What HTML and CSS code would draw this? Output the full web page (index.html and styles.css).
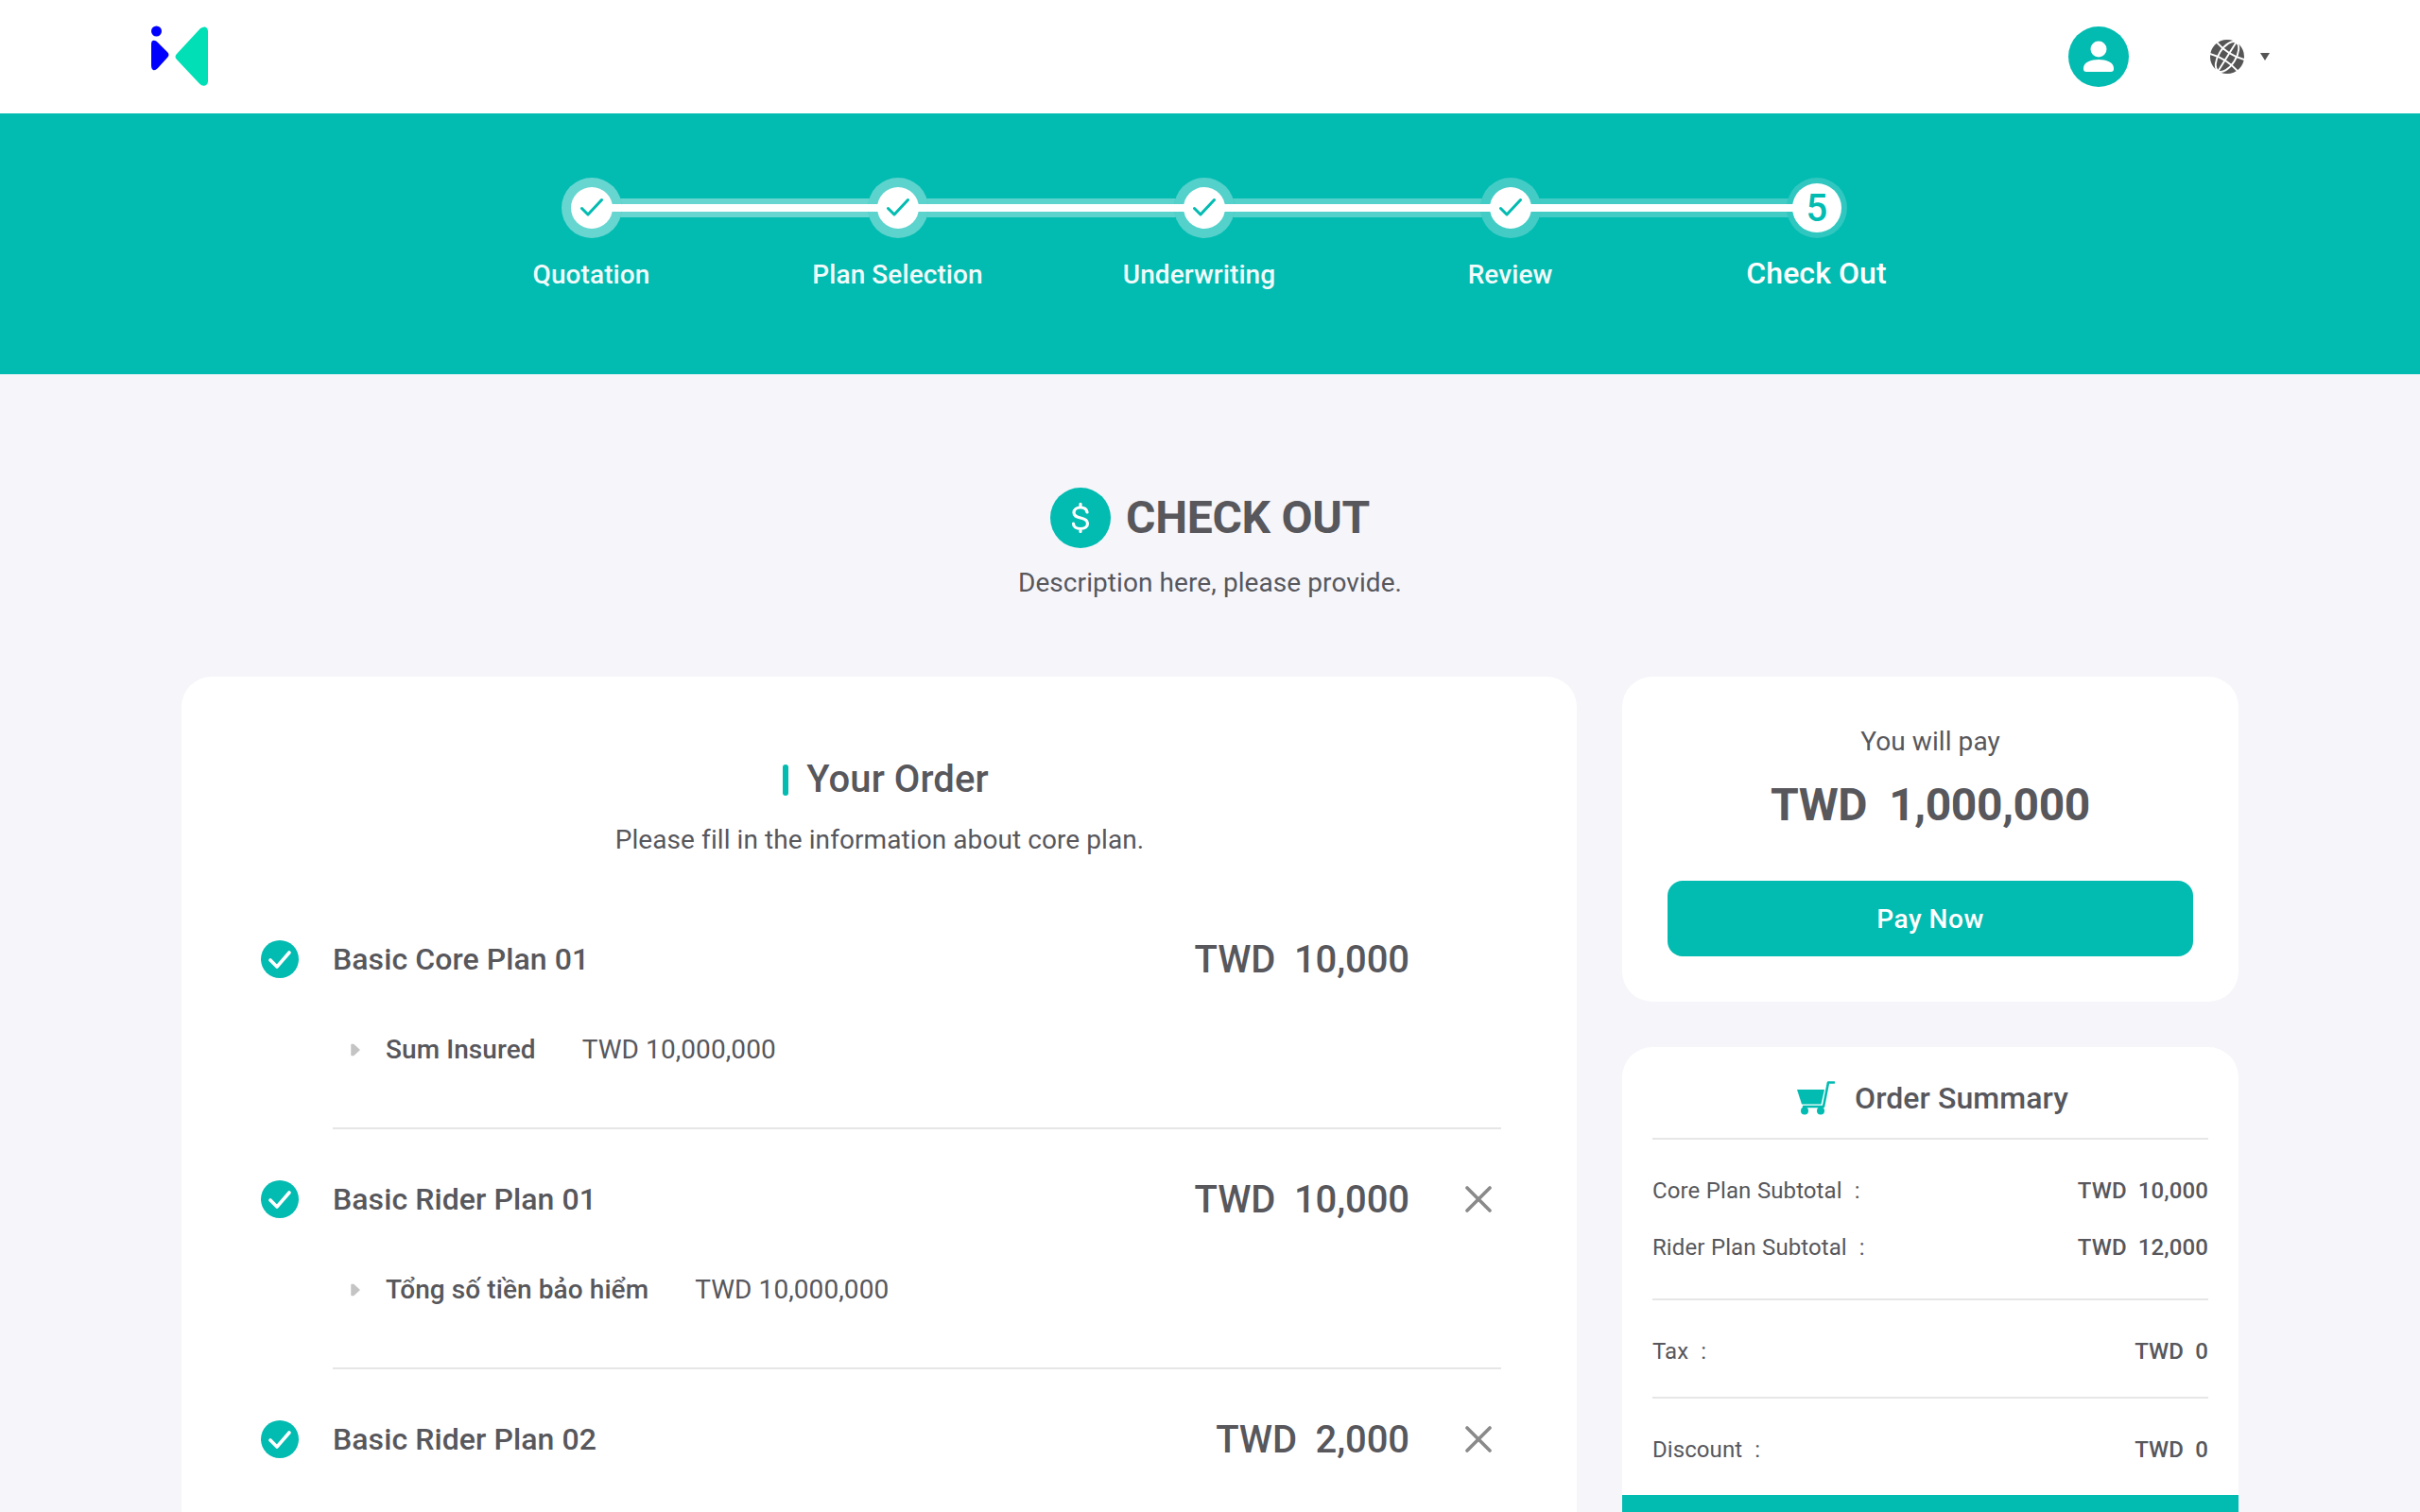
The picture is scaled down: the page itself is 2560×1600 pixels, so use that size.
FILE: index.html
```html
<!DOCTYPE html>
<html lang="en">
<head>
    <meta charset="UTF-8">
    <meta name="viewport" content="width=device-width, initial-scale=1.0">
    <title>Check Out</title>
    <link rel="stylesheet" href="styles.css">
</head>
<body>
    <svg class="sprite" width="0" height="0">
        <symbol id="tick" viewBox="0 0 24 24">
            <path d="M1.500 12.500l6.500 6.500L22.500 3.500" fill="none" stroke="currentColor" stroke-width="3" stroke-linecap="round" stroke-linejoin="round"/>
        </symbol>
        <symbol id="done" viewBox="0 0 40 40">
            <circle cx="20" cy="20" r="20" fill="#02bbb1"/>
            <path d="M10 21l7 7 13-15" fill="none" stroke="#fff" stroke-width="3.600" stroke-linecap="round" stroke-linejoin="round"/>
        </symbol>
        <symbol id="close" viewBox="0 0 28 28">
            <path d="M2 2l24 24M26 2L2 26" fill="none" stroke="#8a8a8a" stroke-width="3.600" stroke-linecap="round"/>
        </symbol>
        <symbol id="arrow" viewBox="0 0 10 14">
            <path d="M1 1.500h2L9 7l-6 5.500H1z" fill="#c4c4c4" stroke="#c4c4c4" stroke-width="1.500" stroke-linejoin="round"/>
        </symbol>
    </svg>

    <header class="topbar">
        <svg class="logo" width="60" height="66" viewBox="0 0 60 66">
            <circle cx="5.500" cy="6" r="5.500" fill="#0000ff"/>
            <path d="M0 20q0-5 4-4 1 0 3 2l10 10q3 3 0 6L7 45q-3 3-5 2-2-1-2-5z" fill="#0000ff"/>
            <path d="M52 3q3-2 5-1.500 3 1 3 5v52q0 4-3 5-3 1-6-2L27 36q-3-3 0-6z" fill="#00dfb5"/>
        </svg>
        <div class="topbar-right">
            <div class="avatar">
                <svg width="34" height="34" viewBox="0 0 34 34">
                    <circle cx="17" cy="9" r="8.500" fill="#fff"/>
                    <path d="M1 29c0-6 8-9 16-9s16 3 16 9v1q0 3-3 3H4q-3 0-3-3z" fill="#fff"/>
                </svg>
            </div>
            <svg class="globe" width="36" height="36" viewBox="0 0 36 36">
                <circle cx="18" cy="18" r="18" fill="#555"/>
                <g transform="rotate(32 18 18)" fill="none" stroke="#fff" stroke-width="1.900">
                    <ellipse cx="18" cy="18" rx="9" ry="18"/>
                    <path d="M18 0v36M1 11q17 5 34 0M1 25q17-5 34 0"/>
                </g>
            </svg>
            <span class="caret"></span>
        </div>
    </header>

    <section class="band">
        <div class="steps">
            <div class="step">
                <div class="dot"><span class="ring"></span><svg width="24" height="24"><use href="#tick"/></svg></div>
                <p class="step-label">Quotation</p>
            </div>
            <div class="step">
                <div class="dot"><span class="ring"></span><svg width="24" height="24"><use href="#tick"/></svg></div>
                <p class="step-label">Plan Selection</p>
            </div>
            <div class="step">
                <div class="dot"><span class="ring"></span><svg width="24" height="24"><use href="#tick"/></svg></div>
                <p class="step-label shifted">Underwriting</p>
            </div>
            <div class="step">
                <div class="dot"><span class="ring"></span><svg width="24" height="24"><use href="#tick"/></svg></div>
                <p class="step-label">Review</p>
            </div>
            <div class="step current">
                <div class="dot"><span class="ring"></span><span class="dot-num">5</span></div>
                <p class="step-label">Check Out</p>
            </div>
        </div>
    </section>

    <main class="page">
        <div class="page-head">
            <h1>
                <span class="dollar">
                    <svg width="20" height="32" viewBox="0 0 20 32">
                        <path d="M17 10C16.500 7 14 5 10 5S3 7 3 10.500 5.500 15 10 16s7.500 2.500 7.500 6-3 5.500-7.500 5.500S2.500 25.500 2.500 22M10 1.500V5M10 27.500v3" fill="none" stroke="#fff" stroke-width="3.200" stroke-linecap="round"/>
                    </svg>
                </span>
                CHECK OUT
            </h1>
            <p>Description here, please provide.</p>
        </div>

        <div class="columns">
            <section class="card order">
                <h2 class="order-title">Your Order</h2>
                <p class="order-desc">Please fill in the information about core plan.</p>

                <div class="plans">
                    <div class="plan">
                        <div class="plan-row">
                            <svg class="plan-check" width="40" height="40"><use href="#done"/></svg>
                            <span class="plan-name">Basic Core Plan 01</span>
                            <span class="plan-price">TWD&nbsp; 10,000</span>
                            <span class="plan-close"></span>
                        </div>
                        <div class="plan-sub">
                            <svg class="arrow" width="10" height="14"><use href="#arrow"/></svg>
                            <span class="sub-label">Sum Insured</span>
                            <span>TWD 10,000,000</span>
                        </div>
                    </div>

                    <div class="plan">
                        <div class="plan-row">
                            <svg class="plan-check" width="40" height="40"><use href="#done"/></svg>
                            <span class="plan-name">Basic Rider Plan 01</span>
                            <span class="plan-price">TWD&nbsp; 10,000</span>
                            <span class="plan-close"><svg width="28" height="28"><use href="#close"/></svg></span>
                        </div>
                        <div class="plan-sub">
                            <svg class="arrow" width="10" height="14"><use href="#arrow"/></svg>
                            <span class="sub-label">Tổng số tiền bảo hiểm</span>
                            <span>TWD 10,000,000</span>
                        </div>
                    </div>

                    <div class="plan">
                        <div class="plan-row">
                            <svg class="plan-check" width="40" height="40"><use href="#done"/></svg>
                            <span class="plan-name">Basic Rider Plan 02</span>
                            <span class="plan-price">TWD&nbsp; 2,000</span>
                            <span class="plan-close"><svg width="28" height="28"><use href="#close"/></svg></span>
                        </div>
                    </div>
                </div>
            </section>

            <aside class="side">
                <section class="card pay">
                    <p class="pay-label">You will pay</p>
                    <p class="pay-amount">TWD&nbsp; 1,000,000</p>
                    <button class="pay-btn">Pay Now</button>
                </section>

                <section class="card summary">
                    <div class="summary-inner">
                        <h3 class="summary-title">
                            <svg width="40" height="36" viewBox="0 0 40 36">
                                <path d="M0 9h29l-3.500 15.500H5z" fill="#02bbb1"/>
                                <path d="M39 1.500h-6L28 27H7" fill="none" stroke="#02bbb1" stroke-width="2.600" stroke-linecap="round" stroke-linejoin="round"/>
                                <circle cx="8" cy="31.500" r="4" fill="#02bbb1"/>
                                <circle cx="25" cy="31.500" r="4" fill="#02bbb1"/>
                            </svg>
                            Order Summary
                        </h3>
                        <div class="sum-group first">
                            <div class="sum-row"><span class="sum-key">Core Plan Subtotal &nbsp;:</span><span class="sum-val">TWD&nbsp; 10,000</span></div>
                            <div class="sum-row"><span class="sum-key">Rider Plan Subtotal &nbsp;:</span><span class="sum-val">TWD&nbsp; 12,000</span></div>
                        </div>
                        <div class="sum-group">
                            <div class="sum-row"><span class="sum-key">Tax &nbsp;:</span><span class="sum-val">TWD&nbsp; 0</span></div>
                        </div>
                        <div class="sum-group last">
                            <div class="sum-row"><span class="sum-key">Discount &nbsp;:</span><span class="sum-val">TWD&nbsp; 0</span></div>
                        </div>
                    </div>
                    <div class="summary-foot"></div>
                </section>
            </aside>
        </div>
    </main>
</body>
</html>
```

FILE: styles.css
```css
* { box-sizing: border-box; }
html, body { height: 100%; }
body { margin: 0; height: 1600px; overflow: hidden; background: #f5f5fa; color: #57575c; font-family: Roboto, "Noto Sans", sans-serif; letter-spacing: .08px; }
h1, h2, h3, p { margin: 0; }
.sprite { display: block; height: 0; }

.topbar { height: 120px; background: #fff; padding: 0 159px 0 160px; display: flex; align-items: center; justify-content: space-between; }
.logo { display: block; }
.topbar-right { display: flex; align-items: center; }
.avatar { width: 64px; height: 64px; border-radius: 50%; background: #02bbb1; display: flex; align-items: center; justify-content: center; margin-right: 86px; }
.globe { display: block; margin-right: 17px; }
.caret { width: 0; height: 0; border-left: 5px solid transparent; border-right: 5px solid transparent; border-top: 8px solid #555; }

/* stepper: band < ring < white line < white disc < tick */
.band { height: 276px; background: #02bbb1; padding: 68px 0 0 464px; }
.steps { display: flex; }
.step { width: 324px; display: flex; flex-direction: column; align-items: center; position: relative; --fade: .4; }
.step:nth-child(2) { --fade: .36; }
.step:nth-child(3) { --fade: .32; }
.step:nth-child(4) { --fade: .26; }
.step:nth-child(5) { --fade: .18; }
.step::before { content: ""; position: absolute; left: 162px; width: 324px; top: 22px; height: 20px; background: rgba(255,255,255,var(--fade)); }
.step::after { content: ""; position: absolute; left: 162px; width: 324px; top: 28px; height: 8px; background: #fff; z-index: 2; }
.step.current::before, .step.current::after { display: none; }
.dot { width: 64px; height: 64px; display: flex; align-items: center; justify-content: center; position: relative; color: #02bbb1; }
.dot svg, .dot-num { position: relative; z-index: 4; }
.dot::before { content: ""; position: absolute; left: 10px; top: 10px; width: 44px; height: 44px; border-radius: 50%; background: #fff; z-index: 3; }
.ring { position: absolute; inset: 0; border-radius: 50%; background: #02bbb1; box-shadow: inset 0 0 0 32px rgba(255,255,255,var(--fade)); z-index: 1; }
.step-label { margin-top: 21px; margin-right: 1px; font-size: 28px; line-height: 36px; font-weight: 500; color: #fff; white-space: nowrap; opacity: .95; }
.step-label.shifted { margin-right: 11px; }
.step.current .dot { font-size: 40px; font-weight: 500; }
.step.current .dot::before { left: 6px; top: 6px; width: 52px; height: 52px; }
.step.current .step-label { font-size: 32px; opacity: 1; margin-top: 18px; line-height: 38px; }

.page { padding: 0 192px; }
.page-head { padding-top: 120px; text-align: center; }
.page-head h1 { display: flex; align-items: center; justify-content: center; gap: 16px; font-size: 48px; line-height: 64px; font-weight: 700; letter-spacing: -.3px; }
.dollar { width: 64px; height: 64px; border-radius: 50%; background: #02bbb1; display: flex; align-items: center; justify-content: center; }
.page-head p { margin-top: 16px; font-size: 28px; line-height: 42px; }

.columns { display: grid; grid-template-columns: 1fr 652px; gap: 48px; margin-top: 78px; align-items: start; }
.card { background: #fff; border-radius: 32px; }

.order { padding: 85px 80px 60px 84px; min-height: 1000px; }
.order-title { width: fit-content; margin: 0 auto; padding-left: 35px; font-size: 40px; line-height: 48px; font-weight: 500; position: relative; }
.order-title::before { content: ""; position: absolute; left: 10px; top: 8px; width: 6px; height: 33px; border-radius: 3px; background: #02bbb1; }
.order-desc { margin-top: 22px; margin-right: 3px; text-align: center; font-size: 28px; line-height: 36px; }

.plans { margin-top: 80px; }
.plan { border-bottom: 2px solid #e6e6e6; margin-left: 76px; height: 208px; margin-bottom: 46px; }
.plan:last-child { border-bottom: 0; }
.plan-row { display: flex; align-items: center; height: 56px; position: relative; }
.plan-check { position: absolute; left: -76px; top: 8px; }
.plan-name { flex: 1; font-size: 32px; font-weight: 500; }
.plan-price { font-size: 40px; font-weight: 500; letter-spacing: -.1px; }
.plan-close { width: 97px; display: flex; justify-content: flex-end; padding-right: 10px; }
.plan-close svg { display: block; }
.plan-sub { display: flex; align-items: center; font-size: 28px; margin-top: 51px; padding-left: 19px; }
.sub-label { font-weight: 500; margin-right: 49px; }
.arrow { display: block; margin-right: 27px; }

.side { display: flex; flex-direction: column; gap: 48px; }
.pay { height: 344px; padding: 48px 48px 0; text-align: center; }
.pay-label { font-size: 28px; line-height: 42px; }
.pay-amount { margin-top: 17px; font-size: 48px; line-height: 58px; font-weight: 700; letter-spacing: -.4px; }
.pay-btn { display: block; width: 100%; height: 80px; margin-top: 51px; border: 0; border-radius: 16px; background: #02bbb1; color: #fff; font: 500 28px Roboto, sans-serif; letter-spacing: .5px; }

.summary { overflow: hidden; }
.summary-inner { padding: 0 32px; }
.summary-title { height: 98px; display: flex; align-items: center; justify-content: center; gap: 21px; font-size: 32px; font-weight: 500; border-bottom: 2px solid #e6e6e6; padding: 12px 0 0 5px; }
.sum-group { border-bottom: 2px solid #e6e6e6; padding: 38px 0 32px; font-size: 24px; }
.sum-group.first { padding: 38px 0; }
.sum-group.last { border-bottom: 0; padding-bottom: 32px; }
.sum-row { display: flex; justify-content: space-between; line-height: 32px; }
.sum-row + .sum-row { margin-top: 28px; }
.sum-key { word-spacing: .5px; }
.sum-val { font-weight: 500; letter-spacing: .1px; }
.summary-foot { height: 100px; background: #02bbb1; }
```
